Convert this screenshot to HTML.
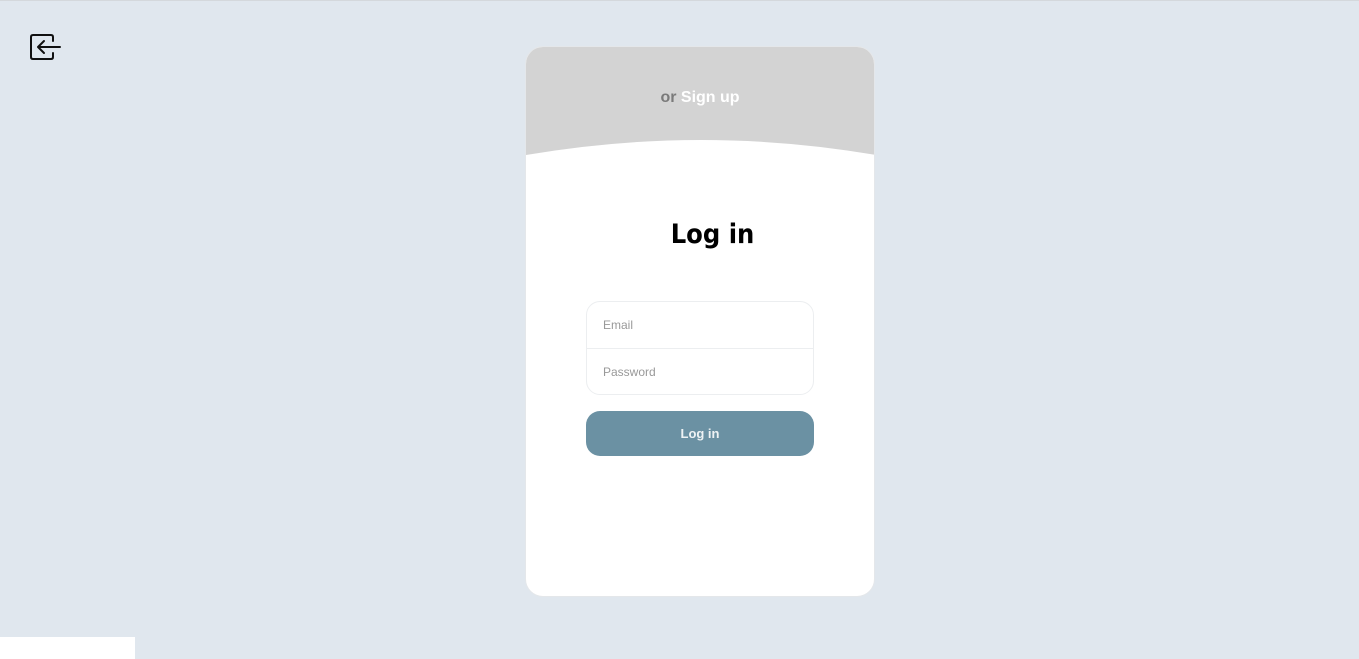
<!DOCTYPE html>
<html><head><style>
html,body{margin:0;padding:0}
body{width:1359px;height:659px;background:#e0e7ee;position:relative;overflow:hidden;font-family:"Liberation Sans",sans-serif}
.line{position:absolute;left:0;top:0;width:100%;height:1px;background:#d4d8dc}
.card{position:absolute;left:525px;top:46px;width:350px;height:551px;background:#fff;border-radius:18px;overflow:hidden;border:1px solid #e4e7ea;box-sizing:border-box}
.top{position:absolute;left:0;top:0;width:100%;height:110px;background:#d3d3d3}
.su{position:absolute;left:0;width:100%;top:42px;text-align:center;font-size:16px;font-weight:bold;color:#7a7a7a}
.su b{color:#fff}
h1{position:absolute;left:0;width:100%;top:172px;margin:0;text-align:center;font-size:27px;font-weight:bold;color:#000;padding-left:25px;box-sizing:border-box;font-family:"DejaVu Sans Condensed","DejaVu Sans",sans-serif}
.box{position:absolute;left:60px;top:254px;width:228px;height:94px;border:1px solid #eceef0;border-radius:14px;box-sizing:border-box}
.box div{height:46px;line-height:46px;padding-left:16px;font-size:12px;color:#999}
.box div:first-child{border-bottom:1px solid #eceef0}
.btn{position:absolute;left:60px;top:364px;width:228px;height:45px;background:#6b91a3;border-radius:14px;color:#eef2f4;font-weight:bold;font-size:13px;text-align:center;line-height:45px}
.wb{position:absolute;left:0;top:637px;width:135px;height:22px;background:#fff}
</style></head><body>
<div class="line"></div>
<svg style="position:absolute;left:29px;top:33px" width="32" height="28" viewBox="0 0 32 28"><path d="M24 8V4Q24 2 22 2H4Q2 2 2 4V24Q2 26 4 26H22Q24 26 24 24V20" fill="none" stroke="#111" stroke-width="2" stroke-linecap="round"/><path d="M31 14H9M15 8L9 14L15 20" fill="none" stroke="#111" stroke-width="2" stroke-linecap="round" stroke-linejoin="round"/></svg>
<div class="card">
<div class="top"></div>
<svg style="position:absolute;left:0;top:88px" width="350" height="30" viewBox="0 0 350 30"><path d="M0 20Q175 -10 350 20V30H0Z" fill="#fff"/></svg>
<div class="su">or <b>Sign up</b></div>
<h1>Log in</h1>
<div class="box"><div>Email</div><div>Password</div></div>
<div class="btn">Log in</div>
</div>
<div class="wb"></div>
</body></html>
